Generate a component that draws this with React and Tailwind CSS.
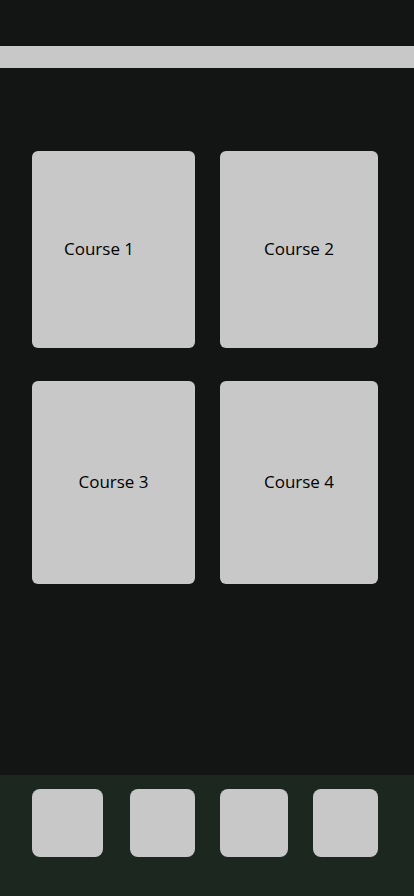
import React from 'react';

const Card = ({ label, className }) => (
    <div className={`rounded-[6px] bg-[#c8c8c8] flex items-center pb-[2px] text-[17px] text-black ${className}`}>
        {label}
    </div>
);

export default function App() {
    return (
        <div className="h-[896px] w-[414px] bg-[#131514] flex flex-col" style={{ fontFamily: '"Open Sans", "Noto Sans", sans-serif' }}>
            <div className="mt-[46px] h-[22px] bg-[#c8c8c8]" />

            <div className="mt-[83px] pl-[32px] flex flex-col gap-[33px]">
                <div className="flex gap-[25px]">
                    <Card label="Course 1" className="w-[163px] h-[197px] pl-[32px]" />
                    <Card label="Course 2" className="w-[158px] h-[197px] justify-center" />
                </div>
                <div className="flex gap-[25px]">
                    <Card label="Course 3" className="w-[163px] h-[203px] justify-center" />
                    <Card label="Course 4" className="w-[158px] h-[203px] justify-center" />
                </div>
            </div>

            <div className="flex-1" />

            <div className="h-[121px] bg-[#1b271f] pt-[14px] pl-[32px] flex items-start">
                <div className="w-[71px] h-[68px] rounded-[8px] bg-[#c8c8c8]" />
                <div className="ml-[27px] w-[65px] h-[68px] rounded-[8px] bg-[#c8c8c8]" />
                <div className="ml-[25px] w-[68px] h-[68px] rounded-[8px] bg-[#c8c8c8]" />
                <div className="ml-[25px] w-[65px] h-[68px] rounded-[8px] bg-[#c8c8c8]" />
            </div>
        </div>
    );
}
